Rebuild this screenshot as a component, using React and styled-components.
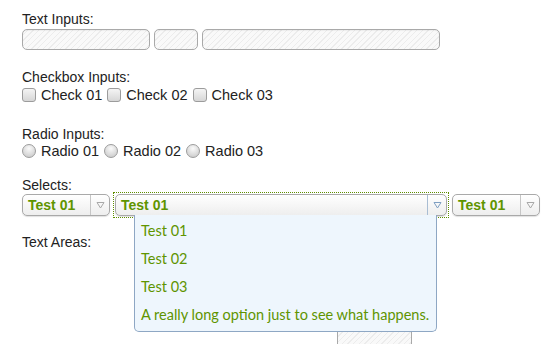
import React from 'react';
import styled, { createGlobalStyle } from 'styled-components';

const Global = createGlobalStyle`
  html { overflow: hidden; }
  html, body { margin: 0; padding: 0; background: #fff; }
  body { font-family: "Liberation Sans", Arial, sans-serif; color: #222; }
`;

function App() {
  return (
    <Page>
      <Global />
      <Section $mb={19}>
        <Label>Text Inputs:</Label>
        <Row $mt={2}>
          <TextBox $w={128} />
          <TextBox $w={44} />
          <TextBox $w={238} />
        </Row>
      </Section>
      <Section $mb={23}>
        <Label>Checkbox Inputs:</Label>
        <Row $mt={2}>
          {['Check 01', 'Check 02', 'Check 03'].map(t => (
            <Choice key={t}><CheckMark />{t}</Choice>
          ))}
        </Row>
      </Section>
      <Section $mb={18}>
        <Label>Radio Inputs:</Label>
        <Row $mt={1}>
          {['Radio 01', 'Radio 02', 'Radio 03'].map(t => (
            <Choice key={t}><RadioMark />{t}</Choice>
          ))}
        </Row>
      </Section>
      <Section $mb={18}>
        <Label>Selects:</Label>
        <Row $mt={1} $gap={5}>
          <Select $w={88}>
            <SelectText>Test 01</SelectText>
            <Arrow><Tri color="#a8a8a8" /></Arrow>
          </Select>
          <Focus>
            <Select $w={332}>
              <SelectText>Test 01</SelectText>
              <Arrow $open><Tri color="#7f9fc2" /></Arrow>
            </Select>
            <Menu>
              <Option>Test 01</Option>
              <Option>Test 02</Option>
              <Option>Test 03</Option>
              <Option>A really long option just to see what happens.</Option>
            </Menu>
          </Focus>
          <Select $w={88}>
            <SelectText>Test 01</SelectText>
            <Arrow><Tri color="#a8a8a8" /></Arrow>
          </Select>
        </Row>
      </Section>
      <Section>
        <Label>Text Areas:</Label>
        <AreaRow>
          <Area $w={306} $h={30} />
          <Area $w={75} $h={120} />
        </AreaRow>
      </Section>
    </Page>
  );
}

function Tri({ color }) {
  return (
    <svg width="9" height="8" viewBox="0 0 9 8">
      <path d="M1 1.5 H8 L4.5 7 Z" fill="none" stroke={color} strokeWidth="1" strokeLinejoin="round" />
    </svg>
  );
}

export default App;

const stripes = 'repeating-linear-gradient(135deg, #f9f9f9 0 3px, #ececec 3px 4px)';

const Page = styled.div`
  padding: 11px 22px 0;
`;
const Section = styled.div`
  margin-bottom: ${p => p.$mb ?? 0}px;
`;
const Label = styled.div`
  font-size: 14px;
  line-height: 16px;
  color: #222;
`;
const Row = styled.div`
  display: flex;
  align-items: center;
  gap: ${p => p.$gap ?? 4}px;
  margin-top: ${p => p.$mt ?? 0}px;
`;
const TextBox = styled.div`
  width: ${p => p.$w}px;
  height: 21px;
  flex: none;
  box-sizing: border-box;
  border: 1px solid #a9a9a9;
  border-radius: 5px;
  background: ${stripes};
  box-shadow: inset 0 1px 1px rgba(0,0,0,0.05);
`;
const Choice = styled.label`
  display: flex;
  align-items: center;
  font-size: 14.5px;
  line-height: 16px;
  color: #222;
  margin-right: 1px;
`;
const CheckMark = styled.span`
  width: 14px;
  height: 14px;
  flex: none;
  box-sizing: border-box;
  border: 1px solid #9c9c9c;
  border-radius: 3px;
  background: linear-gradient(#f4f4f4, #d6d6d6);
  margin-right: 5px;
`;
const RadioMark = styled(CheckMark)`
  border-radius: 50%;
  background: radial-gradient(circle at 50% 30%, #fafafa, #d2d2d2 75%);
`;
const Focus = styled.div`
  position: relative;
  flex: none;
  outline: 1px dotted #5e8e00;
  outline-offset: 1px;
`;
const Select = styled.div`
  width: ${p => p.$w}px;
  height: 22px;
  flex: none;
  box-sizing: border-box;
  display: flex;
  border: 1px solid #a9a9a9;
  border-radius: 5px;
  background: linear-gradient(#ffffff, #eeeeee);
  box-shadow: 0 1px 1px rgba(0,0,0,0.12);
`;
const SelectText = styled.div`
  flex: 1;
  padding-left: 5px;
  font-weight: bold;
  font-size: 14px;
  line-height: 20px;
  color: #5f9400;
`;
const Arrow = styled.div`
  width: 18px;
  border-left: 1px solid ${p => (p.$open ? '#a9bdd3' : '#c6c6c6')};
  display: flex;
  align-items: center;
  justify-content: center;
`;
const Menu = styled.div`
  position: absolute;
  top: 21px;
  left: 19px;
  width: 303px;
  box-sizing: border-box;
  padding: 2px 0 2px 6px;
  background: #eef6fd;
  border: 1px solid #8ea7c4;
  border-top: none;
  border-radius: 0 0 5px 5px;
  z-index: 2;
`;
const Option = styled.div`
  height: 28px;
  line-height: 28px;
  font-family: "Lato", "DejaVu Sans", sans-serif;
  font-size: 14.5px;
  color: #5f9400;
  white-space: nowrap;
`;
const AreaRow = styled.div`
  display: flex;
  align-items: flex-end;
  gap: 9px;
  margin-top: 7px;
`;
const Area = styled.div`
  width: ${p => p.$w}px;
  height: ${p => p.$h}px;
  box-sizing: border-box;
  flex: none;
  border: 1px solid #a9a9a9;
  background: ${stripes};
`;
